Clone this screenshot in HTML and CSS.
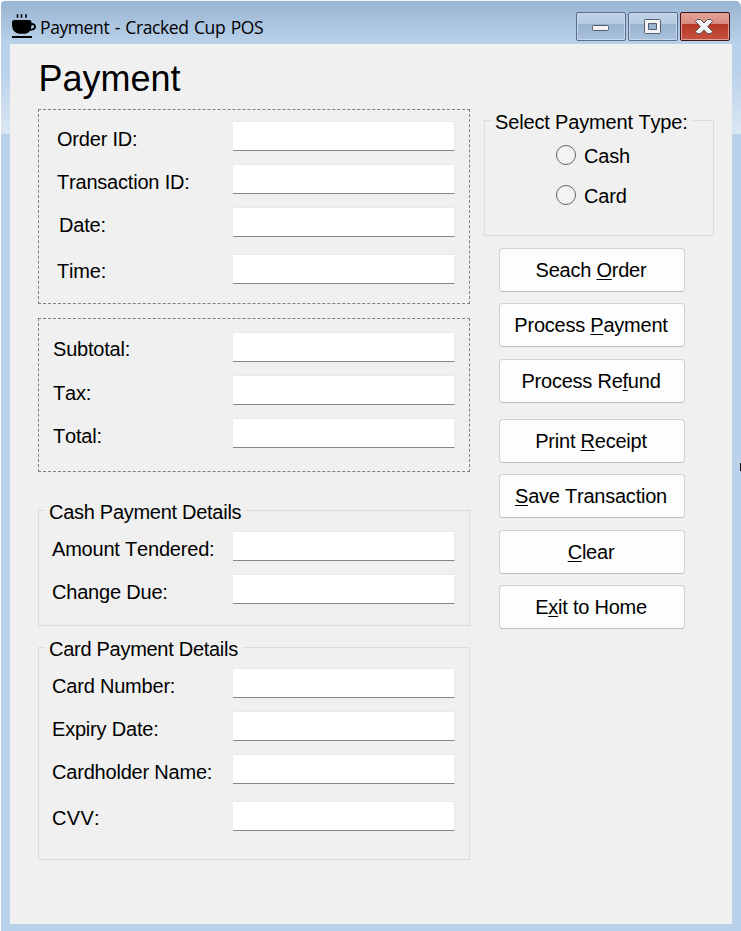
FILE: index.html
```html
<!DOCTYPE html>
<html lang="en">
<head>
<meta charset="utf-8">
<title>Payment - Cracked Cup POS</title>
<link rel="stylesheet" href="styles.css">
</head>
<body>
<div class="window">
  <header class="titlebar">
    <svg class="cup" viewBox="0 0 26 26" width="26" height="26">
      <path d="M6.500 1.200v3.500M10.500 1.200v3.500M15 1.200v3.500" stroke="#000" stroke-width="1.600" fill="none"/>
      <path d="M1 9Q1 7 3.500 7H18Q20.500 7 20.500 9V12Q20 20.500 14 20.700H8.500Q1.500 20.500 1 12Z"/>
      <path d="M19 11.500Q24 10 24 13.700Q24 17 18 16.700" fill="none" stroke="#000" stroke-width="2"/>
      <rect x="1" y="23" width="20" height="2"/>
    </svg>
    <span class="caption">Payment - Cracked Cup POS</span>
    <div class="controls">
      <span class="control minimize"><svg width="17" height="6" viewBox="0 0 17 6"><rect x=".5" y=".5" width="16" height="5" rx="1" fill="#f4f4f4" stroke="#535f70"/></svg></span>
      <span class="control"><svg width="17" height="15" viewBox="0 0 17 15"><path fill-rule="evenodd" d="M1.500.5H15.500Q16.500.5 16.500 1.500V13.500Q16.500 14.500 15.500 14.500H1.500Q.5 14.500.5 13.500V1.500Q.5.5 1.500.5ZM4.500 4.500V10.500H12.500V4.500Z" fill="#f4f4f4" stroke="#535f70"/></svg></span>
      <span class="control close"><svg width="18" height="15" viewBox="0 0 18 15"><path d="M2 .5H5.500L9 4L12.500.5H16L17.500 2.500L12.700 7.500L17.500 12.500L16 14.500H12.500L9 11L5.500 14.500H2L.5 12.500L5.300 7.500L.5 2.500Z" fill="#f4f4f4" stroke="#535666"/></svg></span>
    </div>
  </header>
  <main class="client">
    <section class="left">
      <h1>Payment</h1>
      <div class="panel order">
        <label class="row"><span>Order ID:</span><input></label>
        <label class="row"><span>Transaction ID:</span><input></label>
        <label class="row date"><span>Date:</span><input></label>
        <label class="row time"><span>Time:</span><input></label>
      </div>
      <div class="panel totals">
        <label class="row raised"><span>Subtotal:</span><input></label>
        <label class="row"><span>Tax:</span><input></label>
        <label class="row"><span>Total:</span><input></label>
      </div>
      <fieldset class="cash">
        <legend>Cash Payment Details</legend>
        <label class="row"><span>Amount Tendered:</span><input></label>
        <label class="row"><span>Change Due:</span><input></label>
      </fieldset>
      <fieldset class="card">
        <legend>Card Payment Details</legend>
        <label class="row"><span>Card Number:</span><input></label>
        <label class="row"><span>Expiry Date:</span><input></label>
        <label class="row"><span>Cardholder Name:</span><input></label>
        <label class="row cvv"><span>CVV:</span><input></label>
      </fieldset>
    </section>
    <aside class="right">
      <fieldset class="type">
        <legend>Select Payment Type:</legend>
        <label class="option"><input type="radio" name="type"><span>Cash</span></label>
        <label class="option"><input type="radio" name="type"><span>Card</span></label>
      </fieldset>
      <div class="actions">
        <button>Seach <u>O</u>rder</button>
        <button>Process <u>P</u>ayment</button>
        <button class="lower">Process Re<u>f</u>und</button>
        <button class="apart">Print <u>R</u>eceipt</button>
        <button><u>S</u>ave Transaction</button>
        <button class="lower"><u>C</u>lear</button>
        <button>E<u>x</u>it to Home</button>
      </div>
    </aside>
  </main>
  <i class="tick"></i>
</div>
</body>
</html>
```
FILE: styles.css
```css
* { box-sizing: border-box; }
body { margin: 0; }
.window {
  position: relative;
  width: 741px;
  height: 931px;
  padding: 0 9px 0 10px;
  overflow: hidden;
  border-radius: 7px 7px 0 0;
  background:
    linear-gradient(#fff, #fff) 0 0 / 1px 100% no-repeat,
    linear-gradient(#f5f8fb, #f5f8fb) 0 0 / 100% 1px no-repeat,
    linear-gradient(#99b4d1 0, #b9d1ea 44px, #b9d1ea 70px, #dbe7f4 134px, #b9d1ea 134px);
  font: 20px/24px "Liberation Sans", Arial, sans-serif;
  font-kerning: none;
  letter-spacing: -0.2px;
  color: #000;
}
.titlebar { height: 44px; display: flex; padding-left: 1px; }
.cup { margin-top: 13px; }
.caption {
  margin: 15px 0 0 3px;
  font: 17.5px/24px "Open Sans", "Noto Sans", sans-serif;
  letter-spacing: -0.4px;
  word-spacing: 1.3px;
  white-space: nowrap;
}
.controls { display: flex; gap: 2px; margin: 12px 2px 0 auto; }
.control {
  width: 50px;
  height: 29px;
  display: flex;
  align-items: center;
  justify-content: center;
  padding-right: 1px;
  border: 1px solid #5b6f8d;
  border-radius: 2px;
  background: linear-gradient(#c1d3e8 0, #b5cae1 11px, #98b2cd 11px, #a9c3de 100%);
  box-shadow: inset 0 0 0 1px #c7d8ea;
}
.minimize { padding-top: 3px; }
.close {
  padding-right: 2px;
  border-color: #43131a;
  background: linear-gradient(#e5a49b 0, #d98a7c 11px, #b83a25 11px, #c5523f 100%);
  box-shadow: inset 0 0 0 1px #df9f96;
}
.client {
  display: flex;
  gap: 14px;
  height: 880px;
  padding-left: 28px;
  background: #f0f0f0;
}
.left { width: 432px; }
h1 { margin: 14px 0 10px; padding-left: 0.5px; font-size: 36px; line-height: 41px; font-weight: 400; letter-spacing: 0; }
.panel { border: 1px dashed #808080; }
.order { height: 195px; padding: 11px 0 0 18px; }
.totals { height: 154px; margin-top: 14px; padding: 13px 0 0 14px; }
.row { display: flex; justify-content: space-between; height: 30px; margin: 0 14px 13px 0; }
.row span { padding-top: 6px; white-space: nowrap; }
.row input {
  width: 222px;
  height: 30px;
  padding: 0 4px;
  border: 1px solid #e9e9e9;
  border-width: 1px 1px 1px 0;
  border-bottom-color: #868686;
  border-radius: 0;
  background: #fff;
  font: inherit;
  outline: 0;
}
.date span { padding-left: 2px; }
.time { margin-top: 17px; }
.time span, .raised span, .cvv span { padding-top: 5px; }
.cvv span { letter-spacing: 0.3px; }
fieldset {
  min-width: 0;
  margin: 0;
  padding: 0;
  border: 1px solid #dcdcdc;
}
legend { height: 24px; padding: 0 5px 0 4px; margin-left: 6px; line-height: 28px; white-space: nowrap; }
.cash { height: 128px; margin-top: 26px; padding-left: 13px; }
.card { height: 225px; margin-top: 9px; padding-left: 13px; }
.cash legend, .card legend { margin-left: -7px; letter-spacing: -0.28px; }
.cash legend + .row, .card legend + .row { margin-top: 9px; }
.cvv { margin-top: 17px; }
.right { width: 230px; padding-top: 64px; }
.type { height: 128px; }
.type legend { letter-spacing: -0.15px; }
.option { display: flex; align-items: center; height: 24px; margin: 11px 0 16px 71px; }
.option span { padding-top: 2px; }
.option + .option { margin-bottom: 0; margin-top: 16px; }
.option input {
  appearance: none;
  width: 20px;
  height: 20px;
  margin: 0 8px 0 0;
  border: 1px solid #626262;
  border-radius: 50%;
  background: #f3f3f3;
}
.actions { display: flex; flex-direction: column; gap: 11px; margin: 12px 0 0 15px; }
button {
  width: 186px;
  height: 44px;
  padding: 0 2px 0 0;
  border: 1px solid #d0d0d0;
  border-bottom-color: #bcbcbc;
  border-radius: 4px;
  background: #fdfdfd;
  color: #000;
  font: 20px/24px "Liberation Sans", Arial, sans-serif;
  font-kerning: none;
  letter-spacing: -0.23px;
}
u { text-decoration-thickness: 1px; text-underline-offset: 2px; }
.lower { margin-top: 1px; }
.apart { margin-top: 5px; }
.tick { position: absolute; right: 0; top: 463px; width: 1px; height: 8px; background: #111; }
```
